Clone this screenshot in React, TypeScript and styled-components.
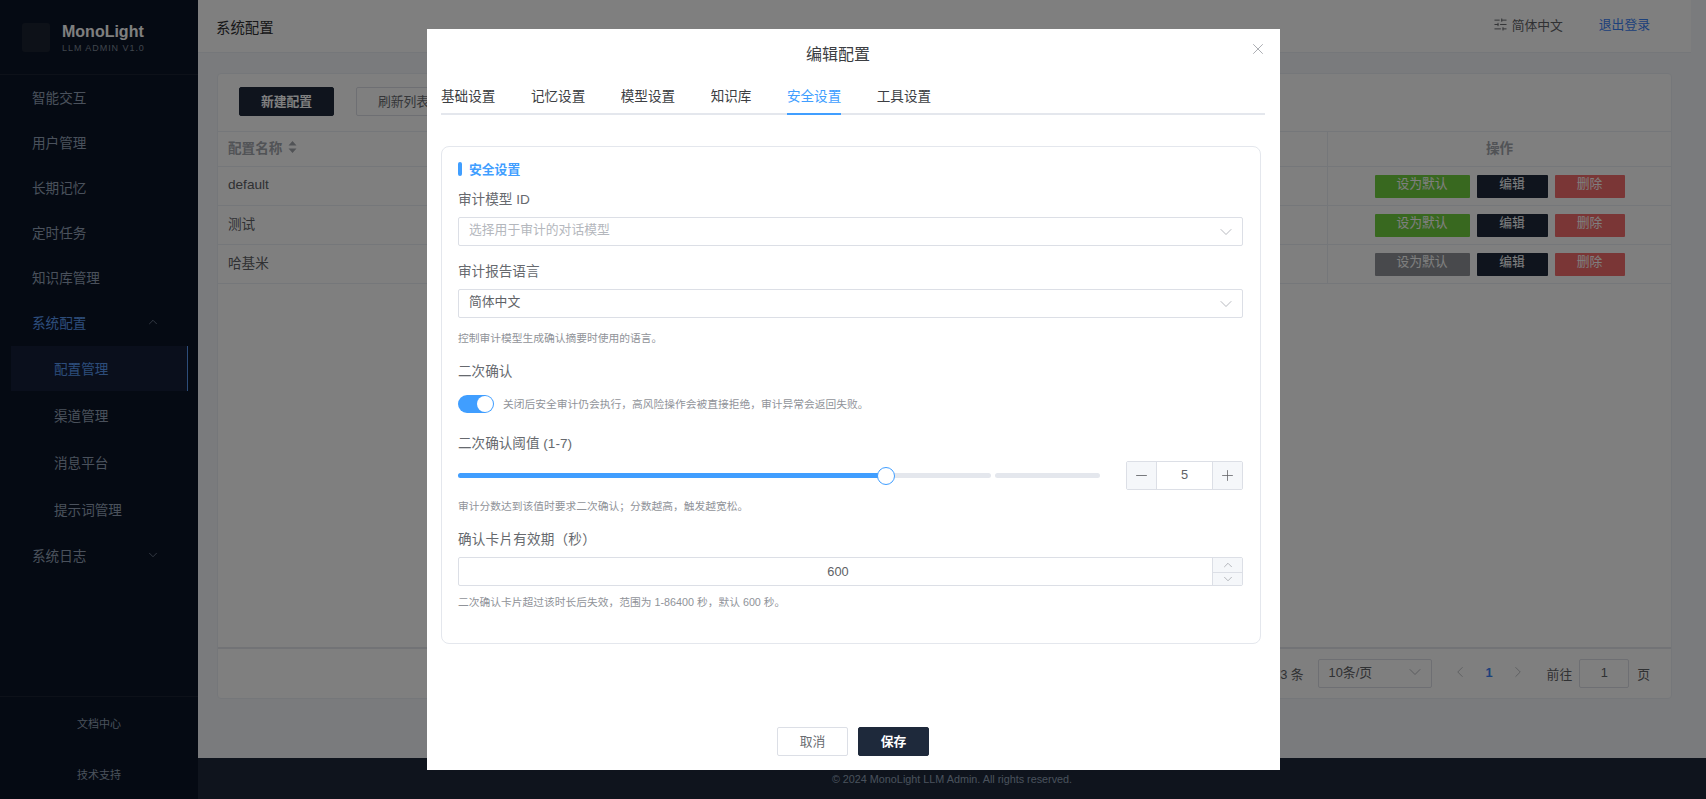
import React from 'react';
import styled, { createGlobalStyle } from 'styled-components';
import { ChevronDown, ChevronUp, ChevronLeft, ChevronRight, X, SlidersHorizontal, Minus, Plus } from 'lucide-react';

const FONT = '"Liberation Sans", "Noto Sans CJK SC", sans-serif';

const Global = createGlobalStyle`
  html, body { margin: 0; padding: 0; height: 100%; overflow: hidden; }
  body { font-family: ${FONT}; font-size: 13.6px; color: #606266; }
  * { box-sizing: border-box; }
`;

const Page = styled.div`
  display: flex;
  height: 799px;
  width: 1706px;
  position: relative;
  overflow: hidden;
`;

/* Sidebar */
const Sidebar = styled.aside`
  width: 198px;
  flex: none;
  background: #0b1426;
  display: flex;
  flex-direction: column;
`;
const Brand = styled.div`
  height: 75px;
  flex: none;
  display: flex;
  align-items: flex-start;
  gap: 12px;
  padding: 23px 0 0 22px;
  border-bottom: 1px solid #1a2233;
`;
const LogoMark = styled.div`
  width: 28px;
  height: 29px;
  border-radius: 3px;
  background: #1a2330;
`;
const BrandText = styled.div`
  display: flex;
  flex-direction: column;
`;
const BrandName = styled.div`
  font-size: 16px;
  font-weight: 700;
  line-height: 18px;
  color: #fff;
`;
const BrandSub = styled.div`
  font-size: 9px;
  line-height: 12px;
  letter-spacing: 0.95px;
  margin-top: 1px;
  color: #7f8a99;
`;
const MenuItem = styled.div<{ $active?: boolean }>`
  height: 45px;
  flex: none;
  display: flex;
  align-items: center;
  justify-content: space-between;
  padding: 0 38px 2px 32px;
  font-size: 13.6px;
  color: ${p => (p.$active ? '#5b9bf5' : '#94a3b8')};
`;
const SubItem = styled.div<{ $active?: boolean }>`
  height: 45px;
  flex: none;
  margin: 1px 10px 1px 11px;
  padding: 0 0 2px 43px;
  display: flex;
  align-items: center;
  font-size: 13.6px;
  color: ${p => (p.$active ? '#5b9bf5' : '#94a3b8')};
  background: ${p => (p.$active ? '#141f38' : 'transparent')};
  border-right: ${p => (p.$active ? '1px solid #5b9bf5' : 'none')};
`;
const SideBottom = styled.div`
  margin-top: auto;
  border-top: 1px solid #1a2233;
`;
const SideLink = styled.div`
  height: 51px;
  display: flex;
  align-items: center;
  justify-content: center;
  font-size: 11px;
  color: #94a3b8;
`;

/* Main */
const Main = styled.main`
  flex: 1;
  min-width: 0;
  display: flex;
  flex-direction: column;
  background: #f5f7fa;
`;
const Body = styled.div`
  width: 1493px;
  flex: 1;
  min-height: 0;
  display: flex;
  flex-direction: column;
`;
const TopBar = styled.header`
  height: 53px;
  flex: none;
  display: flex;
  align-items: center;
  padding: 0 41px 0 18px;
  background: #fff;
  border-bottom: 1px solid #ebeef5;
`;
const Crumb = styled.div`
  font-size: 14.4px;
  color: #303133;
  margin-right: auto;
`;
const LangSwitch = styled.div`
  display: flex;
  align-items: center;
  gap: 4px;
  font-size: 12.8px;
  color: #606266;
  margin-right: 36px;
  padding-bottom: 4px;
`;
const Logout = styled.div`
  font-size: 12.8px;
  color: #3b82f6;
  padding-bottom: 5px;
`;
const Content = styled.div`
  flex: 1;
  padding: 20px 19px 0 19px;
`;
const Card = styled.section`
  height: 626px;
  background: #fff;
  border: 1px solid #ebeef5;
  border-radius: 4px;
  display: flex;
  flex-direction: column;
`;
const Toolbar = styled.div`
  height: 57px;
  flex: none;
  display: flex;
  align-items: flex-start;
  gap: 22px;
  padding: 13px 0 0 21px;
`;
const Btn = styled.button<{ $primary?: boolean; $w: number }>`
  width: ${p => p.$w}px;
  height: 29px;
  padding: 0 0 2px;
  flex: none;
  border-radius: 2px;
  font: inherit;
  font-size: 12.8px;
  font-weight: ${p => (p.$primary ? 600 : 400)};
  color: ${p => (p.$primary ? '#fff' : '#6a6d72')};
  background: ${p => (p.$primary ? '#1e293b' : '#fff')};
  border: 1px solid ${p => (p.$primary ? '#1e293b' : '#dcdfe6')};
`;
const TableRow = styled.div<{ $head?: boolean }>`
  height: ${p => (p.$head ? 35 : 39)}px;
  flex: none;
  display: flex;
  border-top: 1px solid #ebeef5;
  ${p => p.$head && 'font-weight: 700; color: #a3a6ad;'}
`;
const NameCell = styled.div`
  flex: 1;
  display: flex;
  align-items: center;
  gap: 5px;
  padding: 0 0 4px 10px;
  font-size: 13.6px;
`;
const ActionCell = styled.div`
  width: 344px;
  flex: none;
  display: flex;
  align-items: center;
  justify-content: center;
  gap: 7px;
  border-left: 1px solid #ebeef5;
  font-size: 13.6px;
`;
const HeadAction = styled(ActionCell)`
  padding-bottom: 5px;
`;
const RowEnd = styled.div`
  height: 1px;
  flex: none;
  background: #ebeef5;
`;
const ActBtn = styled.div<{ $bg: string; $w: number }>`
  width: ${p => p.$w}px;
  height: 23px;
  flex: none;
  background: ${p => p.$bg};
  color: #fff;
  font-size: 12.8px;
  font-weight: 400;
  line-height: 18px;
  text-align: center;
  border-radius: 1px;
`;
const Pager = styled.div`
  margin-top: auto;
  height: 51px;
  flex: none;
  border-top: 2px solid #e4e7ed;
  display: flex;
  align-items: center;
  justify-content: flex-end;
  padding-right: 21px;
  font-size: 12.8px;
  color: #606266;
`;
const PagerSelect = styled.div`
  width: 114px;
  height: 29px;
  margin-left: 14px;
  padding: 0 6px 4px 10px;
  border: 1px solid #dcdfe6;
  border-radius: 2px;
  display: flex;
  align-items: center;
  justify-content: space-between;
  color: #606266;
`;
const PagerArrows = styled.div`
  display: flex;
  align-items: center;
  margin: 0 14px;
`;
const PageCell = styled.div<{ $on?: boolean }>`
  width: 29px;
  padding-bottom: 3px;
  display: flex;
  justify-content: center;
  font-weight: 700;
  color: ${p => (p.$on ? '#3b82f6' : '#a8abb2')};
`;
const PagerInput = styled.div`
  width: 50px;
  height: 29px;
  margin: 0 8px 0 7px;
  padding-bottom: 2px;
  border: 1px solid #dcdfe6;
  border-radius: 2px;
  display: flex;
  align-items: center;
  justify-content: center;
`;
const Foot = styled.footer`
  height: 41px;
  flex: none;
  background: #1e293b;
  display: flex;
  align-items: center;
  justify-content: center;
  font-size: 10.8px;
  color: #94a3b8;
`;

/* Modal */
const Overlay = styled.div`
  position: absolute;
  inset: 0;
  background: rgba(0, 0, 0, 0.5);
`;
const Modal = styled.div`
  position: absolute;
  left: 427px;
  top: 29px;
  width: 853px;
  height: 741px;
  background: #fff;
  display: flex;
  flex-direction: column;
  padding: 0 15px 0 14px;
`;
const ModalHead = styled.div`
  height: 48px;
  flex: none;
  font-size: 16px;
  color: #3c3e42;
  display: flex;
  align-items: center;
  justify-content: center;
  padding-right: 30px;
`;
const CloseBtn = styled.div`
  position: absolute;
  right: 13px;
  top: 11px;
  width: 18px;
  height: 18px;
  color: #909399;
`;
const Tabs = styled.div`
  height: 38px;
  flex: none;
  display: flex;
  gap: 35.5px;
  border-bottom: 2px solid #e4e7ed;
`;
const Tab = styled.div<{ $active?: boolean }>`
  height: 38px;
  line-height: 39px;
  font-size: 13.6px;
  color: ${p => (p.$active ? '#409eff' : '#3c3e42')};
  border-bottom: 2px solid ${p => (p.$active ? '#409eff' : 'transparent')};
`;
const Section = styled.div`
  width: 820px;
  height: 498px;
  flex: none;
  margin-top: 31px;
  padding: 15px 17px 0 16px;
  border: 1px solid #e4e7ed;
  border-radius: 8px;
`;
const SectionTitle = styled.div`
  height: 14px;
  display: flex;
  align-items: center;
  gap: 7px;
  font-size: 12.8px;
  font-weight: 700;
  color: #409eff;
  padding-bottom: 1px;
  &::before {
    content: '';
    width: 4px;
    height: 14px;
    margin-bottom: -1px;
    border-radius: 2px;
    background: #409eff;
  }
`;
const Label = styled.div<{ $mt: number }>`
  height: 20px;
  line-height: 22px;
  margin-top: ${p => p.$mt}px;
  font-size: 13.6px;
  color: #66696e;
`;
const ParenLabel = styled(Label)`
  font-family: "Liberation Sans", "Noto Sans CJK TC", sans-serif;
  letter-spacing: 0.2px;
`;
const SelectBox = styled.div<{ $placeholder?: boolean }>`
  height: 29px;
  margin-top: 8px;
  padding: 0 6px 0 10px;
  border: 1px solid #dcdfe6;
  border-radius: 2px;
  display: flex;
  align-items: center;
  justify-content: space-between;
  font-size: 12.8px;
  color: ${p => (p.$placeholder ? '#b4b7bd' : '#606266')};
`;
const SelectText = styled.span`
  margin-bottom: 7px;
`;
const Hint = styled.div<{ $mt?: number }>`
  height: 16px;
  line-height: 16px;
  margin-top: ${p => p.$mt ?? 0}px;
  font-size: 10.75px;
  color: #909399;
`;
const SwitchRow = styled.div`
  height: 18px;
  margin-top: 14px;
  display: flex;
  align-items: center;
  gap: 9px;
`;
const Switch = styled.div`
  position: relative;
  width: 36px;
  height: 18px;
  border-radius: 9px;
  background: #409eff;
  &::after {
    content: '';
    position: absolute;
    right: 1px;
    top: 1px;
    width: 16px;
    height: 16px;
    border-radius: 50%;
    background: #fff;
  }
`;
const SliderRow = styled.div`
  height: 29px;
  margin-top: 8px;
  display: flex;
  align-items: center;
`;
const TrackMain = styled.div`
  position: relative;
  width: 533px;
  height: 5px;
  border-radius: 3px;
  background: #e4e7ed;
`;
const TrackFill = styled.div`
  height: 100%;
  border-radius: 3px;
  background: #409eff;
`;
const Thumb = styled.div`
  position: absolute;
  top: 50%;
  width: 18px;
  height: 18px;
  margin: -9px 0 0 -9px;
  border-radius: 50%;
  background: #fff;
  border: 1.5px solid #409eff;
`;
const TrackRest = styled.div`
  width: 105px;
  height: 5px;
  margin-left: 4px;
  border-radius: 3px;
  background: #e4e7ed;
`;
const Stepper = styled.div`
  width: 117px;
  height: 29px;
  margin-left: auto;
  border: 1px solid #dcdfe6;
  border-radius: 2px;
  display: flex;
`;
const StepBtn = styled.div<{ $left?: boolean }>`
  width: 30px;
  flex: none;
  background: #f5f7fa;
  display: flex;
  align-items: center;
  justify-content: center;
  color: #606266;
  ${p => (p.$left ? 'border-right: 1px solid #dcdfe6;' : 'border-left: 1px solid #dcdfe6;')}
`;
const StepValue = styled.div`
  flex: 1;
  display: flex;
  align-items: center;
  justify-content: center;
  padding-bottom: 2px;
  font-size: 12.8px;
  color: #606266;
`;
const NumberBox = styled.div`
  height: 29px;
  margin-top: 8px;
  border: 1px solid #dcdfe6;
  border-radius: 2px;
  display: flex;
`;
const NumberValue = styled.div`
  flex: 1;
  display: flex;
  align-items: center;
  justify-content: center;
  padding: 0 0 0 5px;
  font-size: 12.8px;
  color: #606266;
`;
const Spinner = styled.div`
  width: 30px;
  flex: none;
  background: #f5f7fa;
  border-left: 1px solid #dcdfe6;
  display: flex;
  flex-direction: column;
`;
const SpinCell = styled.div<{ $top?: boolean }>`
  height: ${p => (p.$top ? 15 : 12)}px;
  flex: none;
  display: flex;
  align-items: center;
  justify-content: center;
  overflow: visible;
  color: #909399;
  ${p => p.$top && 'border-bottom: 1px solid #dcdfe6;'}
  svg { flex: none; }
`;
const ModalFoot = styled.div`
  margin-top: auto;
  padding-bottom: 14px;
  display: flex;
  justify-content: center;
  gap: 10px;
`;

const names = ['default', '测试', '哈基米'];

export default function App() {
  return (
    <Page>
      <Global />
      <Sidebar>
        <Brand>
          <LogoMark />
          <BrandText>
            <BrandName>MonoLight</BrandName>
            <BrandSub>LLM ADMIN V1.0</BrandSub>
          </BrandText>
        </Brand>
        <MenuItem>智能交互</MenuItem>
        <MenuItem>用户管理</MenuItem>
        <MenuItem>长期记忆</MenuItem>
        <MenuItem>定时任务</MenuItem>
        <MenuItem>知识库管理</MenuItem>
        <MenuItem $active>
          系统配置
          <ChevronUp size={14} strokeWidth={1.1} color="#94a3b8" />
        </MenuItem>
        <SubItem $active>配置管理</SubItem>
        <SubItem>渠道管理</SubItem>
        <SubItem>消息平台</SubItem>
        <SubItem>提示词管理</SubItem>
        <MenuItem>
          系统日志
          <ChevronDown size={14} strokeWidth={1.1} color="#94a3b8" />
        </MenuItem>
        <SideBottom>
          <SideLink>文档中心</SideLink>
          <SideLink>技术支持</SideLink>
        </SideBottom>
      </Sidebar>

      <Main>
        <Body>
          <TopBar>
            <Crumb>系统配置</Crumb>
            <LangSwitch>
              <SlidersHorizontal size={15} strokeWidth={1.5} />
              简体中文
            </LangSwitch>
            <Logout>退出登录</Logout>
          </TopBar>
          <Content>
            <Card>
              <Toolbar>
                <Btn $primary $w={95}>新建配置</Btn>
                <Btn $w={95}>刷新列表</Btn>
              </Toolbar>
              <TableRow $head>
                <NameCell>
                  配置名称
                  <svg width="11" height="14" viewBox="0 0 11 14" fill="#a3a6ad">
                    <path d="M5.5 1 9.5 5.5H1.5zM5.5 13 1.5 8.5h8z" />
                  </svg>
                </NameCell>
                <HeadAction>操作</HeadAction>
              </TableRow>
              {names.map((n, i) => (
                <TableRow key={n}>
                  <NameCell>{n}</NameCell>
                  <ActionCell>
                    <ActBtn $bg={i === 2 ? '#909399' : '#70d03e'} $w={95}>设为默认</ActBtn>
                    <ActBtn $bg="#1e293b" $w={71}>编辑</ActBtn>
                    <ActBtn $bg="#f56c6c" $w={70}>删除</ActBtn>
                  </ActionCell>
                </TableRow>
              ))}
              <RowEnd />
              <Pager>
                共 3 条
                <PagerSelect>
                  10条/页
                  <ChevronDown size={20} strokeWidth={1} color="#a8abb2" />
                </PagerSelect>
                <PagerArrows>
                  <PageCell><ChevronLeft size={18} strokeWidth={1} /></PageCell>
                  <PageCell $on>1</PageCell>
                  <PageCell><ChevronRight size={18} strokeWidth={1} /></PageCell>
                </PagerArrows>
                前往
                <PagerInput>1</PagerInput>
                页
              </Pager>
            </Card>
          </Content>
        </Body>
        <Foot>© 2024 MonoLight LLM Admin. All rights reserved.</Foot>
      </Main>

      <Overlay>
        <Modal>
          <ModalHead>编辑配置</ModalHead>
          <CloseBtn><X size={18} strokeWidth={1} /></CloseBtn>
          <Tabs>
            <Tab>基础设置</Tab>
            <Tab>记忆设置</Tab>
            <Tab>模型设置</Tab>
            <Tab>知识库</Tab>
            <Tab $active>安全设置</Tab>
            <Tab>工具设置</Tab>
          </Tabs>
          <Section>
            <SectionTitle>安全设置</SectionTitle>
            <Label $mt={13}>审计模型 ID</Label>
            <SelectBox $placeholder>
              <SelectText>选择用于审计的对话模型</SelectText>
              <ChevronDown size={20} strokeWidth={1} color="#a8abb2" />
            </SelectBox>
            <Label $mt={15}>审计报告语言</Label>
            <SelectBox>
              <SelectText>简体中文</SelectText>
              <ChevronDown size={20} strokeWidth={1} color="#a8abb2" />
            </SelectBox>
            <Hint $mt={12}>控制审计模型生成确认摘要时使用的语言。</Hint>
            <Label $mt={15}>二次确认</Label>
            <SwitchRow>
              <Switch />
              <Hint>关闭后安全审计仍会执行，高风险操作会被直接拒绝，审计异常会返回失败。</Hint>
            </SwitchRow>
            <Label $mt={20}>二次确认阈值 (1-7)</Label>
            <SliderRow>
              <TrackMain>
                <TrackFill style={{ width: '428px' }} />
                <Thumb style={{ left: '428px' }} />
              </TrackMain>
              <TrackRest />
              <Stepper>
                <StepBtn $left><Minus size={17} strokeWidth={1.2} /></StepBtn>
                <StepValue>5</StepValue>
                <StepBtn><Plus size={17} strokeWidth={1.1} /></StepBtn>
              </Stepper>
            </SliderRow>
            <Hint $mt={8}>审计分数达到该值时要求二次确认；分数越高，触发越宽松。</Hint>
            <ParenLabel $mt={15}>确认卡片有效期（秒）</ParenLabel>
            <NumberBox>
              <NumberValue>600</NumberValue>
              <Spinner>
                <SpinCell $top><ChevronUp size={14} strokeWidth={1.1} /></SpinCell>
                <SpinCell><ChevronDown size={14} strokeWidth={1.1} /></SpinCell>
              </Spinner>
            </NumberBox>
            <Hint $mt={8}>二次确认卡片超过该时长后失效，范围为 1-86400 秒，默认 600 秒。</Hint>
          </Section>
          <ModalFoot>
            <Btn $w={71}>取消</Btn>
            <Btn $primary $w={71}>保存</Btn>
          </ModalFoot>
        </Modal>
      </Overlay>
    </Page>
  );
}
